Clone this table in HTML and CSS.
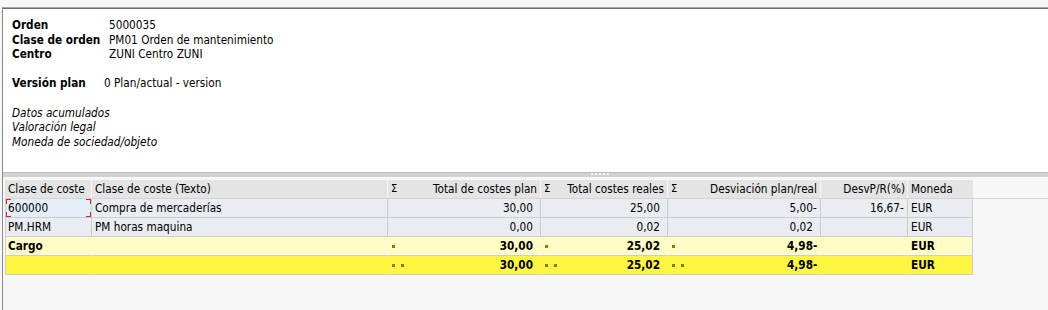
FILE: index.html
```html
<!DOCTYPE html>
<html lang="es">
<head>
<meta charset="utf-8">
<title>Orden 5000035</title>
<link rel="stylesheet" href="styles.css">
</head>
<body>
<div class="topbar"></div>
<div class="frame">
  <section class="info">
    <div class="kv kv-a">
      <span class="k">Orden</span><span class="v">5000035</span>
      <span class="k">Clase de orden</span><span class="v">PM01 Orden de mantenimiento</span>
      <span class="k">Centro</span><span class="v">ZUNI Centro ZUNI</span>
    </div>
    <div class="kv kv-b">
      <span class="k">Versión plan</span><span class="v">0 Plan/actual - version</span>
    </div>
    <div class="notes">
      <div>Datos acumulados</div>
      <div>Valoración legal</div>
      <div>Moneda de sociedad/objeto</div>
    </div>
  </section>
  <div class="splitter"><span class="grip"></span></div>
  <section class="lower">
    <div class="headwrap">
      <div class="row head">
        <div class="c">Clase de coste</div>
        <div class="c">Clase de coste (Texto)</div>
        <div class="c sum"><span class="sig">Σ</span><span>Total de costes plan</span></div>
        <div class="c sum"><span class="sig">Σ</span><span>Total costes reales</span></div>
        <div class="c sum"><span class="sig">Σ</span><span>Desviación plan/real</span></div>
        <div class="c r">DesvP/R(%)</div>
        <div class="c last">Moneda</div>
      </div>
    </div>
    <div class="row data">
      <div class="c sel">600000<i class="cr tl"></i><i class="cr tr"></i><i class="cr bl"></i><i class="cr br"></i></div>
      <div class="c">Compra de mercaderías</div>
      <div class="c n">30,00<span class="sg"></span></div>
      <div class="c n">25,00<span class="sg"></span></div>
      <div class="c n">5,00<span class="sg">-</span></div>
      <div class="c n">16,67<span class="sg">-</span></div>
      <div class="c">EUR</div>
    </div>
    <div class="row data">
      <div class="c">PM.HRM</div>
      <div class="c">PM horas maquina</div>
      <div class="c n">0,00<span class="sg"></span></div>
      <div class="c n">0,02<span class="sg"></span></div>
      <div class="c n">0,02<span class="sg"></span></div>
      <div class="c n"></div>
      <div class="c">EUR</div>
    </div>
    <div class="row sub">
      <div class="c">Cargo</div>
      <div class="c"></div>
      <div class="c m"><span class="dots"><b></b></span><span>30,00<span class="sg"></span></span></div>
      <div class="c m"><span class="dots"><b></b></span><span>25,02<span class="sg"></span></span></div>
      <div class="c m"><span class="dots"><b></b></span><span>4,98<span class="sg">-</span></span></div>
      <div class="c"></div>
      <div class="c">EUR</div>
    </div>
    <div class="row tot">
      <div class="c"></div>
      <div class="c"></div>
      <div class="c m"><span class="dots"><b></b><b></b></span><span>30,00<span class="sg"></span></span></div>
      <div class="c m"><span class="dots"><b></b><b></b></span><span>25,02<span class="sg"></span></span></div>
      <div class="c m"><span class="dots"><b></b><b></b></span><span>4,98<span class="sg">-</span></span></div>
      <div class="c"></div>
      <div class="c">EUR</div>
    </div>
  </section>
</div>
</body>
</html>
```
FILE: styles.css
```css
* { box-sizing: border-box; }
html, body {
  margin: 0;
  padding: 0;
  width: 1048px;
  height: 310px;
  overflow: hidden;
  background: #f7f7f7;
  font-family: "DejaVu Sans Condensed", "DejaVu Sans", sans-serif;
  font-size: 11.7px;
  color: #000;
}
.topbar { height: 7px; background: #f7f7f7; }
.frame {
  margin-left: 2px;
  height: 303px;
  border-left: 1px solid #8a8a8a;
  display: flex;
  flex-direction: column;
}
.info {
  height: 165px;
  background: #fff;
  border-top: 1px solid #a8a8a8;
  box-shadow: inset 0 1px 0 #6e6e6e;
  padding: 10px 0 0 9px;
  line-height: 14.6px;
}
.kv { display: grid; }
.kv-a { grid-template-columns: 97px auto; }
.kv-b { grid-template-columns: 92px auto; margin-top: 14.6px; }
.k { font-weight: bold; }
.notes { margin-top: 14.6px; font-style: italic; }
.splitter {
  height: 5px;
  background: #d2d2d2;
  border-top: 1px solid #bcbcbc;
  display: flex;
}
.grip {
  margin-left: 588px;
  width: 18px;
  height: 2px;
  background: repeating-linear-gradient(90deg, #f4f4f4 0 2px, transparent 2px 4px);
}
.lower {
  flex: 1;
  background: #f7f7f7;
  padding: 3px 0 0 2px;
}
.row {
  display: grid;
  grid-template-columns: 87px 296px 153px 127px 153px 87px 65px;
  height: 19px;
  line-height: 18px;
  white-space: nowrap;
}
.headwrap { border-bottom: 1px solid #d4d4d4; }
.head { height: 18px; }
.head .c { background: #e4e4e4; border-right: 1px solid #f6f6f6; padding: 0 3px; }
.head .c.last { border-right: none; }
.head .sum { display: flex; justify-content: space-between; }
.head .r { text-align: right; padding-right: 2px; }
.sig { font-size: 10px; font-family: "DejaVu Sans", sans-serif; }
.c { padding: 0 3px; overflow: hidden; position: relative; }
.data, .sub, .tot { width: 968px; }
.data .c, .sub .c, .tot .c { border-right: 1px solid #cdcdcd; border-bottom: 1px solid #cdcdcd; }
.data .c:first-child, .sub .c:first-child, .tot .c:first-child { border-left: 1px solid #cdcdcd; padding-left: 2px; }
.data .c { background: #e9ecf0; }
.sub .c { background: #fffcc6; font-weight: bold; }
.sub .c:not(:last-child) { border-right-color: #fffcc6; }
.tot .c { background: #fff641; font-weight: bold; }
.tot .c:not(:last-child) { border-right-color: #fff641; }
.n { text-align: right; padding-right: 2px; }
.sg { display: inline-block; width: 5px; text-align: left; }
.m { display: flex; justify-content: space-between; padding-right: 2px; }
.dots { display: flex; gap: 6px; align-items: center; padding-left: 1px; }
.dots b { width: 3px; height: 3px; background: #8c7f00; }
.sel { background: #e3eef9 !important; }
.cr { position: absolute; width: 5px; height: 5px; border: 0 solid #e02020; }
.tl { left: 0; top: 0; border-left-width: 1px; border-top-width: 1px; }
.tr { right: 0; top: 0; border-right-width: 1px; border-top-width: 1px; }
.bl { left: 0; bottom: 0; border-left-width: 1px; border-bottom-width: 1px; }
.br { right: 0; bottom: 0; border-right-width: 1px; border-bottom-width: 1px; }
```
